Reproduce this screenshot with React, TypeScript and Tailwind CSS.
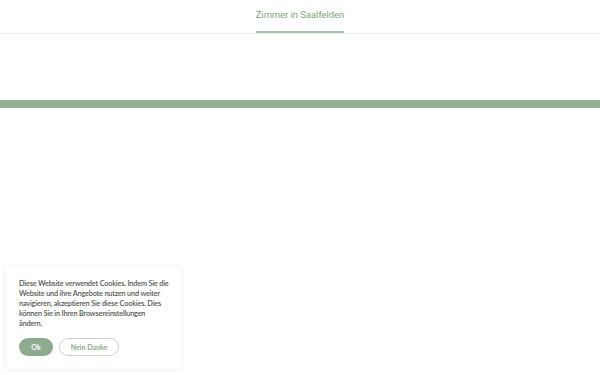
export default function App() {
  return (
    <div className="w-[600px] h-[375px] bg-white relative overflow-hidden" style={{ fontFamily: "Roboto, sans-serif" }}>
      <div className="h-[34px] border-b border-[#ececec] flex justify-center">
        <div className="flex flex-col items-center">
          <div className="h-[32px] flex items-center text-[9.4px] text-[#7f9f80]">Zimmer in Saalfelden</div>
          <div className="h-[2px] w-[88px] bg-[#a9c2aa]" />
        </div>
      </div>
      <div className="h-[66px]" />
      <div className="h-[8px] bg-[#94b095]" />
      <div className="absolute left-[6px] top-[267px] w-[175px] h-[102px] bg-white shadow-[0_0_6px_rgba(0,0,0,0.08)] pl-[13px] pt-[12px]" style={{ fontFamily: "Lato, sans-serif" }}>
        <p className="text-[7.3px] leading-[10px] tracking-[-0.17px] text-[#555] font-semibold whitespace-nowrap">
          Diese Website verwendet Cookies. Indem Sie die<br />
          Website und ihre Angebote nutzen und weiter<br />
          navigieren, akzeptieren Sie diese Cookies. Dies<br />
          können Sie in Ihren Browsereinstellungen<br />
          ändern.
        </p>
        <div className="flex gap-[6px] mt-[9px]">
          <button className="w-[34px] h-[18px] rounded-full bg-[#8eab8f] text-white text-[7px] font-bold">Ok</button>
          <button className="w-[60px] h-[18px] rounded-full border border-[#c8d8c8] text-[#8eab8f] text-[7px] font-bold">Nein Danke</button>
        </div>
      </div>
    </div>
  );
}
